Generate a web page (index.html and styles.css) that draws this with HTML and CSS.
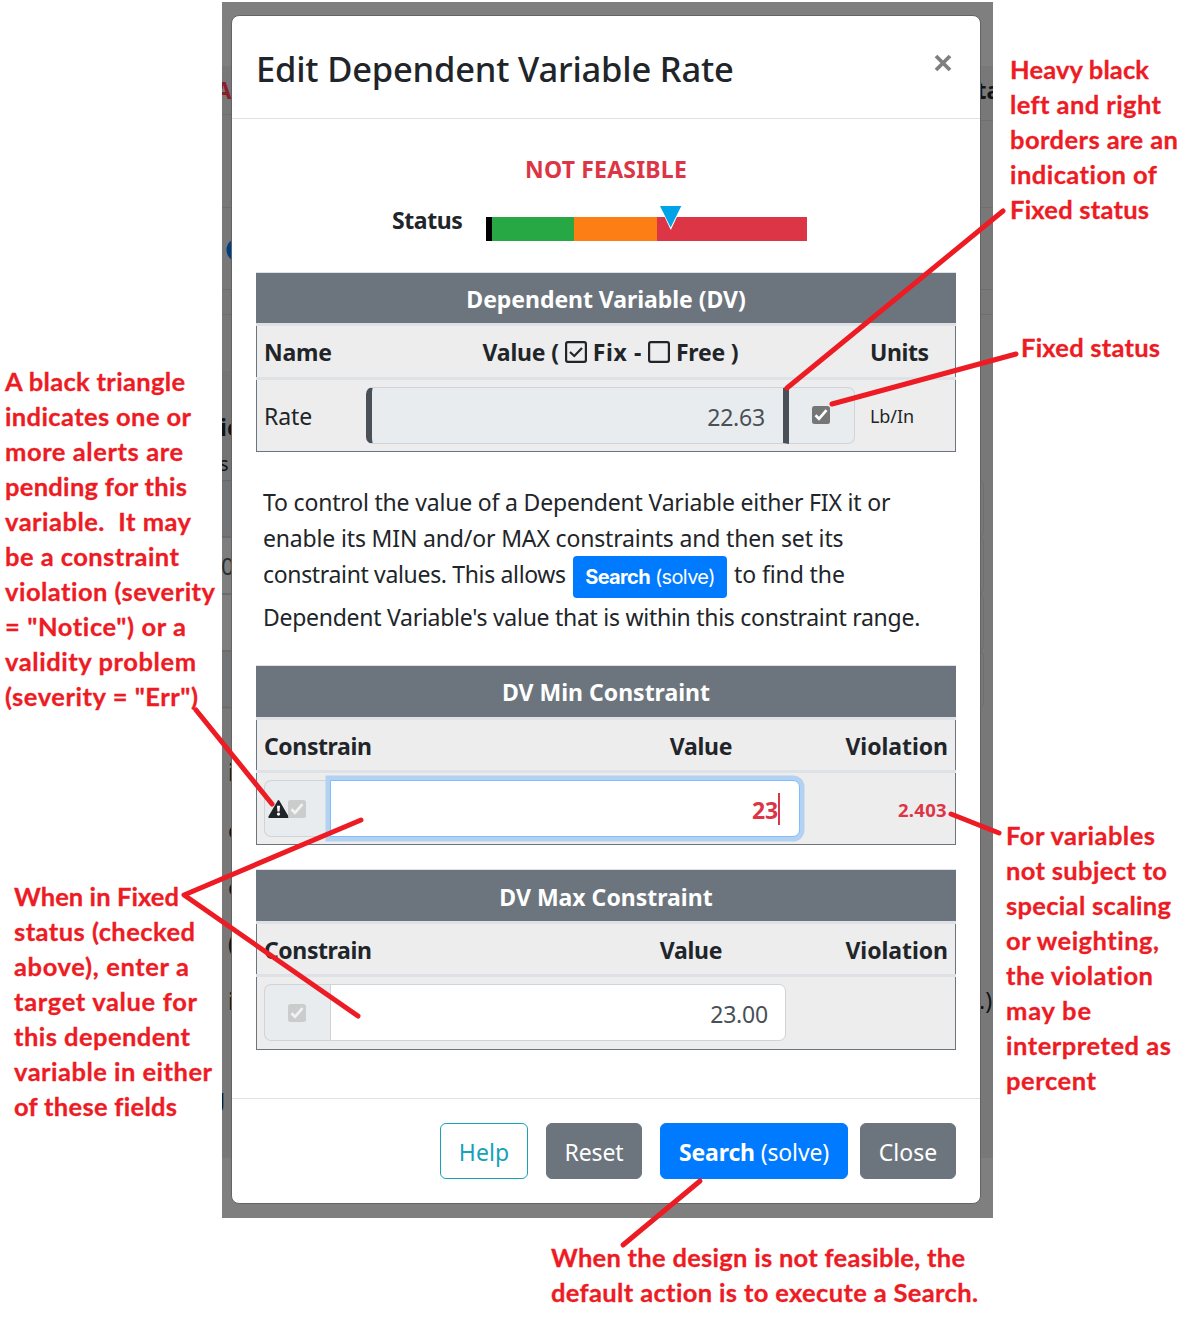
FILE: index.html
```html
<!DOCTYPE html>
<html lang="en">
<head>
<meta charset="utf-8">
<title>Edit Dependent Variable Rate</title>
<link rel="stylesheet" href="styles.css">
</head>
<body>
<main class="page">
  <div class="backdrop">
    <div class="behind" aria-hidden="true">
      <svg width="771" height="1216" viewBox="222 2 771 1216">
        <rect x="222" y="66" width="771" height="1092" fill="#787878"/>
        <g stroke="#6d6e6f" stroke-width="1">
          <path d="M222 114.500H232M222 207.500H232M980 120.500H993M980 207.500H993M980 289.500H993M980 314.500H993M222 289.500H232M222 314.500H232M222 371.500H232"/>
          <path d="M980 480.500Q983.500 481 983.500 486V531Q983.500 536 980 537M980 537.500Q983.500 538 983.500 543V588Q983.500 593 980 594M980 594.500Q983.500 595 983.500 600V645Q983.500 650 980 651M980 651.500Q983.500 652 983.500 657V702Q983.500 707 980 708" fill="none"/>
        </g>
        <path d="M222 371h10v108h-10z" fill="#747474"/>
        <path d="M222 481h10v55h-10z" fill="#737475"/>
        <path d="M222 538h10v55h-10zM222 595h10v55h-10z" fill="#7e7e7e"/>
        <path d="M222 652h10v55h-10z" fill="#737475"/>
        <path d="M222 480.500h10M222 537h10M222 594h10M222 651h10M222 707.500h10" stroke="#66696c" stroke-width="1.500"/>
        <circle cx="238" cy="250" r="11.500" fill="#003e80"/>
        <g class="behind-text" fill="#111315">
          <text x="215.500" y="99" fill="#8a1e2a" font-weight="700">A</text>
          <text x="976.500" y="99" font-weight="700">ta</text>
          <text x="220" y="436" font-weight="700">ic</text>
          <text x="219" y="471" font-size="20">s</text>
          <text x="221" y="575" fill="#2b2e31">0</text>
          <text x="228" y="781">i</text>
          <text x="228" y="839">o</text>
          <text x="228" y="896">o</text>
          <text x="228" y="952">(</text>
          <text x="228" y="1010">i</text>
          <text x="979" y="1009">.)</text>
          <text x="211" y="1106" fill="#0a1c30">g</text>
        </g>
      </svg>
    </div>

    <section class="modal" role="dialog" aria-label="Edit Dependent Variable Rate">
      <header class="modal-header">
        <h1 class="modal-title">Edit Dependent Variable Rate</h1>
        <button class="close" aria-label="Close dialog">
          <svg width="18" height="18" viewBox="0 0 18 18"><path d="M2 2L16 16M16 2L2 16" stroke="#7f7f7f" stroke-width="3.800"/></svg>
        </button>
      </header>

      <div class="modal-body">
        <p class="feasibility">NOT FEASIBLE</p>
        <div class="status">
          <span class="status-label">Status</span>
          <div class="gauge">
            <i class="seg seg-black"></i><i class="seg seg-green"></i><i class="seg seg-orange"></i><i class="seg seg-red"></i>
            <svg class="marker" width="24" height="28" viewBox="0 0 24 28"><path d="M0 1H23.500L11.800 26Z" fill="#fff"/><path d="M1 2H22.300L11.700 23.400Z" fill="#00a2e8"/></svg>
          </div>
        </div>

        <div class="table variable">
          <div class="table-title">Dependent Variable (DV)</div>
          <div class="row heads">
            <span>Name</span>
            <span class="fixfree">
              <span>Value (</span>
              <svg width="22" height="22" viewBox="0 0 22 22" fill="none" stroke="#212529"><rect x="1.100" y="1.100" width="19.800" height="19.800" rx="1.800" stroke-width="2.200"/><path d="M5 11L9.300 15L17 7" stroke-width="2.200"/></svg>
              <span class="fix">Fix -</span>
              <svg width="22" height="22" viewBox="0 0 22 22" fill="none" stroke="#212529"><rect x="1.100" y="1.100" width="19.800" height="19.800" rx="1.800" stroke-width="2.200"/></svg>
              <span>Free )</span>
            </span>
            <span class="units-head">Units</span>
          </div>
          <div class="row values">
            <span class="name">Rate</span>
            <div class="group">
              <div class="field fixed">22.63</div>
              <div class="addon addon-end">
                <svg width="18" height="18" viewBox="0 0 18 18"><rect width="18" height="18" rx="2.500" fill="#767676"/><path d="M3.500 9.300L7 12.800L14.500 4.200" fill="none" stroke="#fff" stroke-width="2.700"/></svg>
              </div>
            </div>
            <span class="units">Lb/In</span>
          </div>
        </div>

        <div class="help-text">
          <div class="line l1">To control the value of a Dependent Variable either FIX it or</div>
          <div class="line l2">enable its MIN and/or MAX constraints and then set its</div>
          <div class="line with-button"><span class="l3">constraint values. This allows</span><span class="mini-button"><b>Search</b> (solve)</span><span class="l4">to find the</span></div>
          <div class="line l5">Dependent Variable's value that is within this constraint range.</div>
        </div>

        <div class="table min">
          <div class="table-title">DV Min Constraint</div>
          <div class="row heads"><span class="constrain">Constrain</span><span class="value">Value</span><span class="violation">Violation</span></div>
          <div class="row values">
            <div class="group">
              <div class="addon addon-start">
                <svg class="alert" width="21" height="18" viewBox="0 0 21 18"><path d="M10.500 1L19.800 17H1.200Z" fill="#212529" stroke="#212529" stroke-width="1.800" stroke-linejoin="round"/><path d="M9 5.800h3l-.400 5.700H9.400z" fill="#fff"/><circle cx="10.500" cy="14.100" r="1.600" fill="#fff"/></svg>
                <svg width="18" height="18" viewBox="0 0 18 18"><rect width="18" height="18" rx="2.500" fill="#cbcccc"/><path d="M3.500 9.300L7 12.800L14.500 4.200" fill="none" stroke="#f1f2f3" stroke-width="2.700"/></svg>
              </div>
              <div class="field focused">23<i class="caret"></i></div>
            </div>
            <span class="amount">2.403</span>
          </div>
        </div>

        <div class="table max">
          <div class="table-title">DV Max Constraint</div>
          <div class="row heads"><span class="constrain">Constrain</span><span class="value">Value</span><span class="violation">Violation</span></div>
          <div class="row values">
            <div class="group">
              <div class="addon addon-start">
                <svg width="18" height="18" viewBox="0 0 18 18"><rect width="18" height="18" rx="2.500" fill="#cbcccc"/><path d="M3.500 9.300L7 12.800L14.500 4.200" fill="none" stroke="#f1f2f3" stroke-width="2.700"/></svg>
              </div>
              <div class="field plain">23.00</div>
            </div>
          </div>
        </div>
      </div>

      <footer class="modal-footer">
        <button class="btn btn-help">Help</button>
        <button class="btn btn-reset">Reset</button>
        <button class="btn btn-search"><b>Search</b> (solve)</button>
        <button class="btn btn-close">Close</button>
      </footer>
    </section>
  </div>

  <svg class="callouts" width="1200" height="1325" viewBox="0 0 1200 1325">
    <g class="pointers">
      <path d="M1003 211L787 388"/>
      <path d="M1016 354L832 404"/>
      <path d="M196 710L272 804"/>
      <path d="M361 820L184 895L358 1016"/>
      <path d="M951 814L999 833"/>
      <path d="M700 1181L623 1245"/>
    </g>
    <g class="notes">
      <text x="1010" y="79" textLength="139">Heavy black</text>
      <text x="1010" y="114" textLength="151">left and right</text>
      <text x="1010" y="149" textLength="168">borders are an</text>
      <text x="1010" y="184" textLength="147">indication of</text>
      <text x="1010" y="219" textLength="139">Fixed status</text>
      <text x="1021" y="357" textLength="139">Fixed status</text>

      <text x="5" y="391" textLength="180">A black triangle</text>
      <text x="5" y="426" textLength="186">indicates one or</text>
      <text x="5" y="461" textLength="178">more alerts are</text>
      <text x="5" y="496" textLength="182">pending for this</text>
      <text x="5" y="531" textLength="186" xml:space="preserve">variable.  It may</text>
      <text x="5" y="566" textLength="174">be a constraint</text>
      <text x="5" y="601" textLength="210">violation (severity</text>
      <text x="5" y="636" textLength="181">= "Notice") or a</text>
      <text x="5" y="671" textLength="191">validity problem</text>
      <text x="5" y="706" textLength="193">(severity = "Err")</text>

      <text x="14" y="906" textLength="165">When in Fixed</text>
      <text x="14" y="941" textLength="181">status (checked</text>
      <text x="14" y="976" textLength="175">above), enter a</text>
      <text x="14" y="1011" textLength="183">target value for</text>
      <text x="14" y="1046" textLength="176">this dependent</text>
      <text x="14" y="1081" textLength="198">variable in either</text>
      <text x="14" y="1116" textLength="163">of these fields</text>

      <text x="1006" y="845" textLength="149">For variables</text>
      <text x="1006" y="880" textLength="161">not subject to</text>
      <text x="1006" y="915" textLength="165">special scaling</text>
      <text x="1006" y="950" textLength="153">or weighting,</text>
      <text x="1006" y="985" textLength="147">the violation</text>
      <text x="1006" y="1020" textLength="85">may be</text>
      <text x="1006" y="1055" textLength="165">interpreted as</text>
      <text x="1006" y="1090" textLength="90">percent</text>

      <text x="551" y="1267" textLength="414">When the design is not feasible, the</text>
      <text x="551" y="1302" textLength="427">default action is to execute a Search.</text>
    </g>
  </svg>
</main>
</body>
</html>
```
FILE: styles.css
```css
* { box-sizing: border-box; }

body {
  margin: 0;
  background: #fff;
  color: #212529;
  font: 23px/36px "Noto Sans", "Open Sans", sans-serif;
}

h1, p { margin: 0; }
b { font-weight: 700; }
svg { display: block; flex: none; }

.page {
  position: relative;
  width: 1200px;
  height: 1325px;
  padding: 2px 0 0 222px;
  overflow: hidden;
}

/* Dimmed application behind the dialog */
.backdrop {
  position: relative;
  width: 771px;
  height: 1216px;
  padding: 13px 12px 0 9px;
  background: #7f7f7f;
}
.behind { position: absolute; inset: 0; overflow: hidden; }
.behind-text { font-size: 23px; }

/* Dialog */
.modal {
  position: relative;
  width: 750px;
  height: 1189px;
  border: 1px solid #646464;
  border-radius: 8px;
  background: #fff;
  display: flex;
  flex-direction: column;
}
.modal-header {
  height: 103px;
  padding: 0 28px 0 24px;
  border-bottom: 1px solid #dee2e6;
  display: flex;
  justify-content: space-between;
}
.modal-title {
  font-size: 34.5px;
  font-weight: 500;
  line-height: 52px;
  letter-spacing: -0.19px;
  padding-top: 27px;
  white-space: nowrap;
}
.close {
  height: 18px;
  margin-top: 38px;
  padding: 0;
  border: 0;
  background: none;
}

.modal-body {
  height: 979px;
  padding: 32px 24px 0;
}
.feasibility {
  color: #dc3545;
  font-weight: 700;
  text-align: center;
  letter-spacing: 0.2px;
}
.status {
  display: flex;
  margin: 15px 0 31px 136px;
  height: 39px;
}
.status-label {
  width: 94px;
  font-weight: 700;
  letter-spacing: -0.4px;
}
.gauge {
  position: relative;
  display: flex;
  height: 24px;
  margin-top: 15px;
}
.seg-black { width: 6px; background: #000; }
.seg-green { width: 82px; background: #28a745; }
.seg-orange { width: 83px; background: #fd7e14; }
.seg-red { width: 150px; background: #dc3545; }
.marker { position: absolute; left: 173px; top: -13px; }

/* Tables */
.table {
  width: 700px;
  border-top: 1px solid #dee2e6;
  border-bottom: 1px solid #6c757d;
  background: #ededed;
}
.table-title {
  height: 51px;
  padding-top: 8px;
  background: #6c757d;
  color: #fff;
  font-weight: 700;
  text-align: center;
}
.variable .table-title { height: 50px; letter-spacing: -0.05px; }
.max .table-title { padding-top: 9px; }
.row {
  position: relative;
  display: flex;
  border-top: 3px solid #dee2e6;
  padding: 0 8px;
  background: linear-gradient(#6c757d, #6c757d) left / 1px 100% no-repeat,
              linear-gradient(#6c757d, #6c757d) right / 1px 100% no-repeat;
}
.heads { height: 53px; padding-top: 8px; font-weight: 700; letter-spacing: -0.2px; }
.variable .heads { height: 54px; }
.variable .heads, .variable .values {
  display: grid;
  grid-template-columns: 102px 489px 1fr;
}
.fixfree {
  display: flex;
  justify-content: center;
  gap: 6px;
  white-space: nowrap;
}
.fixfree svg { margin-top: 7px; }
.fix { letter-spacing: 0.6px; }
.units-head { padding-left: 15px; letter-spacing: -0.4px; }
.values { height: 74px; padding-top: 7px; }
.min .values { height: 74px; }
.max .values { height: 75px; }
.name { padding-top: 11px; letter-spacing: -0.1px; }
.units { padding: 11px 0 0 15px; font-size: 18px; letter-spacing: -0.1px; }

.group { display: flex; height: 57px; }
.addon {
  display: flex;
  align-items: center;
  border: 1px solid #ced4da;
  background: #e9ecef;
}
.addon svg { margin-bottom: 1px; }
.addon-start svg { margin-bottom: 0; }
.addon-end {
  width: 66px;
  padding-left: 23px;
  border-left: 0;
  border-radius: 0 7px 7px 0;
}
.addon-start {
  width: 67px;
  justify-content: flex-end;
  padding-right: 25px;
  border-right: 0;
  border-radius: 7px 0 0 7px;
}
.addon .alert { margin-right: -1px; }
.field {
  padding-top: 11px;
  border: 1px solid #ced4da;
  color: #495057;
  text-align: right;
  letter-spacing: -0.2px;
}
.fixed {
  width: 423px;
  padding-right: 18px;
  border-left: 6px solid #495057;
  border-right: 6px solid #495057;
  border-radius: 7px 0 0 7px;
  background: #e9ecef;
}
.focused {
  display: flex;
  justify-content: flex-end;
  width: 470px;
  margin-left: -1px;
  padding-right: 19px;
  border-color: #80bdff;
  border-radius: 0 7px 7px 0;
  background: #fff;
  box-shadow: 0 0 0 4.5px #b3d2f2;
  color: #dc3545;
  font-weight: 700;
}
.caret { width: 2px; height: 32px; margin-top: 1px; background: #dc3545; }
.plain {
  width: 456px;
  margin-left: -1px;
  padding-right: 17px;
  border-radius: 0 7px 7px 0;
  background: #fff;
}
.constrain { width: 339px; letter-spacing: -0.4px; }
.value { width: 196px; text-align: center; letter-spacing: -0.3px; }
.max .constrain { width: 329px; }
.violation { margin-left: auto; letter-spacing: -0.05px; }
.amount {
  margin-left: auto;
  padding: 12px 1px 0 0;
  color: #dc3545;
  font-size: 18.5px;
  font-weight: 700;
  letter-spacing: 0.3px;
}

/* Explanation between the tables */
.help-text { padding: 32px 0 0 7px; height: 213px; }
.line { height: 36px; white-space: nowrap; }
.l1 { letter-spacing: -0.18px; }
.l2 { letter-spacing: -0.16px; }
.l3 { width: 310px; letter-spacing: -0.34px; }
.l4 { padding-left: 7px; letter-spacing: -0.1px; }
.l5 { letter-spacing: -0.27px; }
.with-button { display: flex; height: 43px; }
.mini-button {
  width: 154px;
  height: 42px;
  border-radius: 4px;
  background: #007bff;
  color: #fff;
  font: 20px/42px "Inter", "Roboto", sans-serif;
  letter-spacing: -0.65px;
  text-align: center;
}

.min { margin-bottom: 24px; }

/* Footer */
.modal-footer {
  display: flex;
  justify-content: flex-end;
  height: 105px;
  padding: 24px 24px 0;
  border-top: 1px solid #dee2e6;
}
.btn {
  height: 56px;
  padding: 2px 0 0;
  border: 1px solid #6c757d;
  border-radius: 6px;
  background: #6c757d;
  color: #fff;
  font: inherit;
  letter-spacing: -0.15px;
  white-space: nowrap;
}
.btn-help {
  width: 88px;
  margin-right: 18px;
  border-color: #17a2b8;
  background: #fff;
  color: #17a2b8;
  letter-spacing: 0.1px;
}
.btn-reset { width: 96px; margin-right: 18px; }
.btn-search {
  width: 188px;
  margin-right: 12px;
  border-color: #007bff;
  background: #007bff;
}
.btn-close { width: 96px; letter-spacing: 0; }

/* Red notes drawn over the dialog */
.callouts { position: absolute; left: 0; top: 0; }
.pointers path {
  fill: none;
  stroke: #ed1c24;
  stroke-width: 5;
  stroke-linecap: round;
  stroke-linejoin: round;
}
.notes {
  fill: #ed1c24;
  font: 700 25.5px "Lato", sans-serif;
  font-variant-ligatures: none;
  stroke: #ed1c24;
  stroke-width: 0.3px;
}
```
